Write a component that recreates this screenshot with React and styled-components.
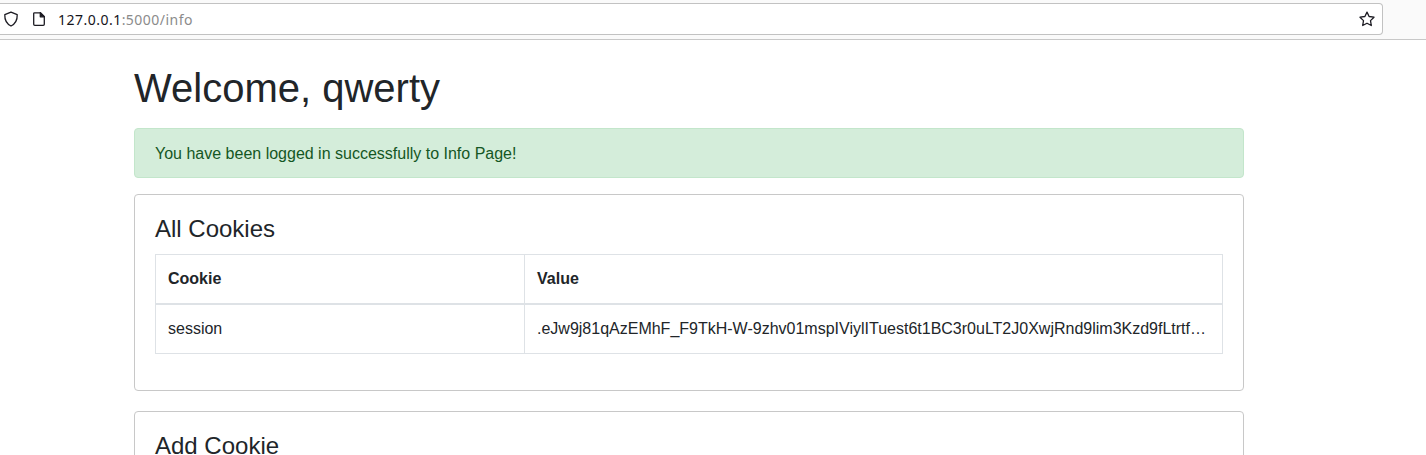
import React from "react";
import styled, { createGlobalStyle } from "styled-components";

const GlobalStyle = createGlobalStyle`
  *, *::before, *::after { box-sizing: border-box; }
  html, body { margin: 0; background: #fff; }
  body {
    font-family: "Liberation Sans", Arial, sans-serif;
    font-size: 16px;
    line-height: 24px;
    color: #212529;
  }
`;

const Page = styled.div`
  height: 100vh;
  overflow: hidden;
`;

const Toolbar = styled.header`
  height: 40px;
  padding: 3px 43px 0 0;
  background: #fafafa;
  border-bottom: 1px solid #c8c8c8;
`;

const AddressBar = styled.div`
  display: flex;
  align-items: center;
  height: 32px;
  padding: 0 7px 0 3px;
  background: #fff;
  border: 1px solid #c2c2c2;
  border-left: 0;
  border-radius: 0 4px 4px 0;
`;

const Icon = styled.svg`
  flex: none;
  width: 16px;
  height: 16px;
  margin-right: ${(p) => p.$gap || 0}px;
  fill: none;
  stroke: #1c1b22;
  stroke-width: 1.3;
  stroke-linejoin: round;
  stroke-linecap: round;
`;

const Url = styled.span`
  flex: 1;
  padding: 2px 0 0 1px;
  font-family: "Noto Sans", "Open Sans", sans-serif;
  font-size: 14px;
  line-height: 20px;
  letter-spacing: 0.48px;
  color: #8b8b8b;
`;

const Host = styled.span`
  color: #15141a;
`;

const Container = styled.main`
  width: 1110px;
  margin: 0 0 0 134px;
  padding-top: 24px;
`;

const Heading = styled.h1`
  margin: 0 0 16px;
  font-size: 40px;
  font-weight: 400;
  line-height: 48px;
`;

const Alert = styled.div`
  margin-bottom: 16px;
  padding: 13px 20px 11px;
  color: #155724;
  background: #d4edda;
  border: 1px solid #c3e6cb;
  border-radius: 4px;
`;

const Card = styled.section`
  height: 197px;
  margin-bottom: 20px;
  padding: 20px;
  border: 1px solid #c8c8c8;
  border-radius: 4px;
`;

const CardTitle = styled.h2`
  margin: 0 0 12px;
  font-size: 24px;
  font-weight: 400;
  line-height: 27px;
`;

const Table = styled.table`
  width: 100%;
  table-layout: fixed;
  border-collapse: collapse;
  border: 1px solid #dee2e6;
`;

const Cell = styled.td`
  width: ${(p) => p.$width || "auto"};
  padding: 12px;
  text-align: left;
  border: 1px solid #dee2e6;
  overflow: hidden;
  white-space: nowrap;
  text-overflow: ellipsis;
`;

const HeadCell = styled(Cell)`
  font-weight: 700;
  border-bottom-width: 2px;
`;

const ShieldIcon = () => (
  <Icon viewBox="0 0 16 16" $gap={12}>
    <path d="M8 1.1 14.2 3.7C14.4 8.5 12.4 12.7 8 15 3.6 12.7 1.6 8.5 1.8 3.7Z" />
  </Icon>
);

const PageIcon = () => (
  <Icon viewBox="0 0 16 16" $gap={10}>
    <path d="M3.5 1.8H9.3L13.3 5.8V13.2Q13.3 14.3 12.2 14.3H3.8Q2.7 14.3 2.7 13.2V2.6Q2.7 1.8 3.5 1.8Z" />
    <path d="M9.3 1.8V5.8H13.3Z" fill="#1c1b22" />
  </Icon>
);

const StarIcon = () => (
  <Icon viewBox="0 0 16 16">
    <path d="M8 1.1 10.1 5.5 15 6.2 11.5 9.6 12.3 14.5 8 12.2 3.7 14.5 4.5 9.6 1 6.2 5.9 5.5Z" />
  </Icon>
);

const cookies = [
  {
    name: "session",
    value:
      ".eJw9j81qAzEMhF_F9TkH-W-9zhv01mspIViylITuest6t1BC3r0uLT2J0XwjRnd9lim3Kzd9fLtrtf…",
  },
];

export default function App() {
  return (
    <Page>
      <GlobalStyle />
      <Toolbar>
        <AddressBar>
          <ShieldIcon />
          <PageIcon />
          <Url>
            <Host>127.0.0.1</Host>:5000/info
          </Url>
          <StarIcon />
        </AddressBar>
      </Toolbar>
      <Container>
        <Heading>Welcome, qwerty</Heading>
        <Alert>You have been logged in successfully to Info Page!</Alert>
        <Card>
          <CardTitle>All Cookies</CardTitle>
          <Table>
            <thead>
              <tr>
                <HeadCell as="th" $width="369px">Cookie</HeadCell>
                <HeadCell as="th">Value</HeadCell>
              </tr>
            </thead>
            <tbody>
              {cookies.map((c) => (
                <tr key={c.name}>
                  <Cell>{c.name}</Cell>
                  <Cell>{c.value}</Cell>
                </tr>
              ))}
            </tbody>
          </Table>
        </Card>
        <Card>
          <CardTitle>Add Cookie</CardTitle>
        </Card>
      </Container>
    </Page>
  );
}
